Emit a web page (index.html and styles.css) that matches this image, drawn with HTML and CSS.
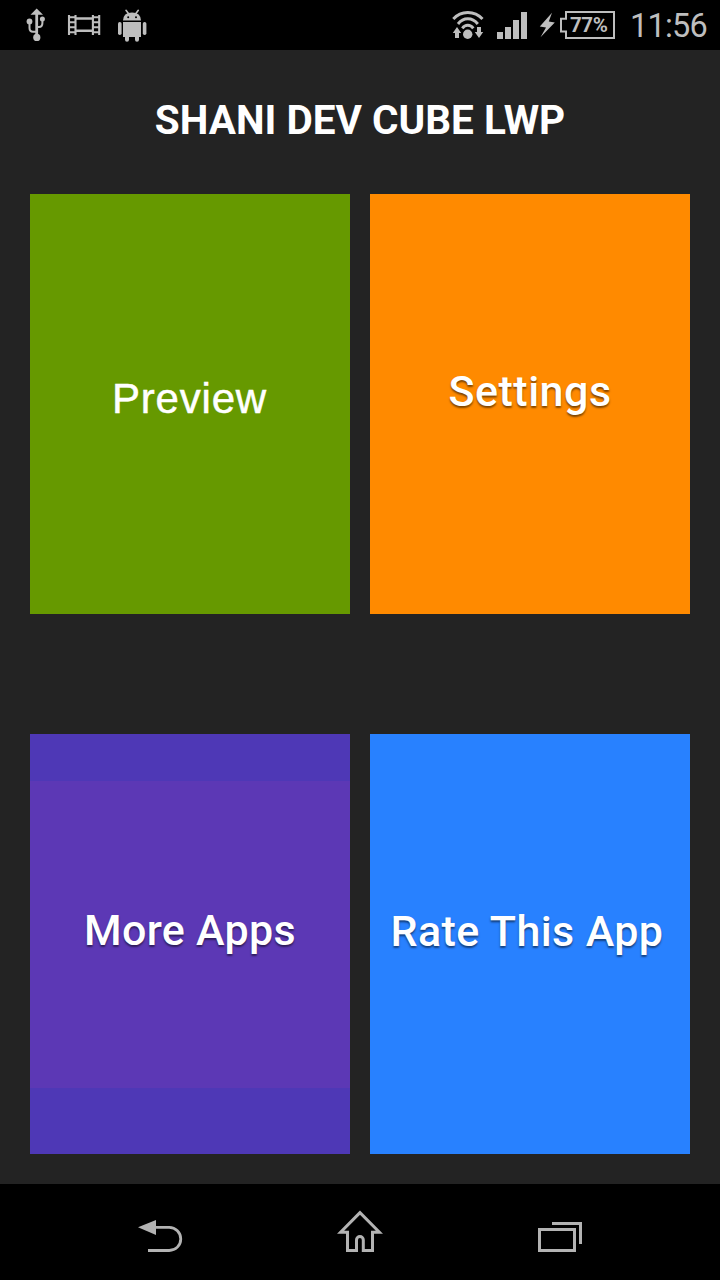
FILE: index.html
```html
<!DOCTYPE html>
<html lang="en">
<head>
<meta charset="utf-8">
<title>Shani Dev Cube LWP</title>
<link rel="stylesheet" href="styles.css">
</head>
<body>
<div class="screen">
  <header class="status">
    <div class="status-left">
      <svg width="20" height="34" viewBox="26 8 20 34">
        <path class="fill" d="M36.7 8.5L43 14.8H30.5Z"/>
        <path class="line" stroke-width="2.8" d="M36.7 13V37"/>
        <path class="line" stroke-width="2" d="M29.5 22V28Q29.5 31.7 33 31.7H36M42.4 19V23Q42.4 27 39 27H37"/>
        <circle class="fill" cx="29.5" cy="21.4" r="2.9"/><circle class="fill" cx="42.4" cy="19" r="2.5"/><circle class="fill" cx="36.8" cy="37.4" r="3.6"/>
      </svg>
      <svg class="film" width="34" height="22" viewBox="67 14 34 22">
        <path class="line" stroke-width="2.1" d="M69 15V35M75.5 15V35M92.9 15V35M99.2 15V35"/>
        <path class="line" stroke-width="2" d="M69 17.3H75.6M69 22.2H75.6M69 27.2H75.6M69 32.2H75.6M92.8 17.3H99.2M92.8 22.2H99.2M92.8 27.2H99.2M92.8 32.2H99.2"/>
        <path class="line" stroke-width="2.4" d="M76 18.5H92.5M76 30.8H92.5"/>
      </svg>
      <svg class="droid" width="30" height="34" viewBox="117 8 30 34">
        <path class="fill" d="M123 20.6Q123.2 12.5 132 12.5T141 20.6Z"/>
        <path class="line" stroke-width="1.6" stroke-linecap="round" d="M126 10.3L128.6 13.8M138.3 10.3L135.7 13.8"/>
        <circle cx="128.2" cy="17.3" r="1"/><circle cx="136" cy="17.3" r="1"/>
        <path class="fill" d="M123 22H141V37H139V39.8A1.9 1.9 0 0 1 135 39.8V37H129V39.8A1.9 1.9 0 0 1 125 39.8V37H123Z"/>
        <rect class="fill" x="118" y="22" width="3.6" height="13" rx="1.7"/><rect class="fill" x="142.8" y="22" width="3.6" height="13" rx="1.7"/>
      </svg>
    </div>
    <div class="status-right">
      <svg width="32" height="30" viewBox="452 10 32 30">
        <path class="line" stroke-width="2.9" d="M453.3 19Q459 12.5 467.8 12.5T482.5 19M458 24Q462 18.8 467.8 18.8T477.8 24M462.3 28.3Q464.5 25.3 467.8 25.3T473.3 28.3"/>
        <circle class="fill" cx="467.7" cy="34.3" r="4.7"/>
        <path class="fill" d="M457 27L461.2 33H459V38H455V33H452.8ZM479 38L483.2 32H481V27H477V32H474.8Z"/>
      </svg>
      <svg class="signal" width="30" height="27" viewBox="497 12 30 27">
        <path class="fill" d="M497 32h6v7h-6zM505 27h6v12h-6zM513 20h6v19h-6zM521 12h6v27h-6z"/>
      </svg>
      <svg class="bolt" width="16" height="26" viewBox="539 12 16 26">
        <path class="fill" d="M552 12.8L539.8 26.6L546 27.6L540.5 37.2L554.8 22.6L548.8 21.4Z"/>
      </svg>
      <div class="battery">
        <svg width="55" height="28" viewBox="560 11 55 28"><path class="line" stroke-width="2" d="M566 12H614V38H566V31.5H561V18.7H566Z"/></svg>
        <span class="percent">77%</span>
      </div>
      <span class="clock">11:56</span>
    </div>
  </header>
  <main class="content">
    <h1 class="title">SHANI DEV CUBE LWP</h1>
    <div class="tiles">
      <div class="tile preview"><span>Preview</span></div>
      <div class="tile settings"><span>Settings</span></div>
      <div class="tile more"><span>More Apps</span></div>
      <div class="tile rate"><span>Rate This App</span></div>
    </div>
  </main>
  <nav class="nav">
    <svg width="46" height="46" viewBox="137 1208 46 46"><path class="fill" d="M138 1227.3L156 1220V1235Z"/><path class="line" stroke-width="2.8" d="M155 1227.4H169.2A11.5 11.5 0 0 1 169.2 1250.5H148"/></svg>
    <svg width="46" height="46" viewBox="337 1208 46 46"><path class="line" stroke-width="3" d="M360 1212.6L340.6 1232.3H347.5V1250.5H356.5V1240A3.4 3.4 0 0 1 363.3 1240V1250.5H372.5V1232.3H379.4Z"/></svg>
    <svg width="46" height="46" viewBox="537 1208 46 46"><path class="line" stroke-width="3" d="M539.5 1229.5H574.5V1250.5H539.5ZM552 1223.5H580.5V1244"/></svg>
  </nav>
</div>
</body>
</html>
```

FILE: styles.css
```css
body { margin: 0; background: #000; font-family: Roboto, sans-serif; }
.screen { width: 720px; height: 1280px; display: flex; flex-direction: column; overflow: hidden; background: #232323; }
svg { display: block; flex: none; }
.fill { fill: #bebebe; }
.line { fill: none; stroke: #bebebe; }

.status { height: 50px; box-sizing: border-box; flex: none; display: flex; justify-content: space-between; align-items: center; padding: 0 12px 0 26px; background: #000; color: #bebebe; }
.status-left, .status-right { display: flex; align-items: center; }
.film { margin-left: 21px; }
.droid { margin-left: 16px; }
.signal { margin: 1px 12px 0 13px; }
.bolt { margin-right: 5px; }
.battery { display: grid; }
.battery > * { grid-area: 1 / 1; }
.percent { padding-left: 10px; font-size: 20.5px; line-height: 28px; font-weight: 700; letter-spacing: -0.4px; }
.clock { width: 78px; margin-left: 15px; font-size: 32.5px; line-height: 50px; letter-spacing: -0.8px; white-space: nowrap; padding-top: 2px; }

.content { height: 1134px; box-sizing: border-box; flex: none; padding: 0 30px 30px; }
.title { height: 144px; margin: 0; font-size: 40.5px; line-height: 140px; font-weight: 700; text-align: center; color: #fff; white-space: nowrap; }
.tiles { display: grid; grid-template-columns: 320px 320px; grid-template-rows: 420px 420px; gap: 120px 20px; }
.tile { box-sizing: border-box; text-align: center; color: #fff; font-size: 43px; font-weight: 500; line-height: 50px; white-space: nowrap; text-shadow: 0 2px 2px rgba(0, 0, 0, 0.5); }
.preview { padding: 180px 1px 0 0; background: #690; font-family: "Liberation Sans", sans-serif; font-size: 42px; font-weight: 400; letter-spacing: 0.8px; text-shadow: none; -webkit-text-stroke: 0.5px #fff; }
.settings { padding-top: 172px; background: #ff8a00; letter-spacing: 0.5px; }
.more { padding-top: 171px; background: linear-gradient(#4e38b6 47px, #5c38b5 47px, #5c38b5 354px, #4e38b6 354px); letter-spacing: 0.3px; }
.rate { padding: 172px 6px 0 0; background: #2881ff; letter-spacing: 0.4px; }

.nav { height: 96px; flex: none; display: flex; justify-content: space-between; align-items: flex-start; box-sizing: border-box; padding: 24px 137px 0; background: #000; }
.nav .fill { fill: #b3b3b3; }
.nav .line { stroke: #b3b3b3; }
```
